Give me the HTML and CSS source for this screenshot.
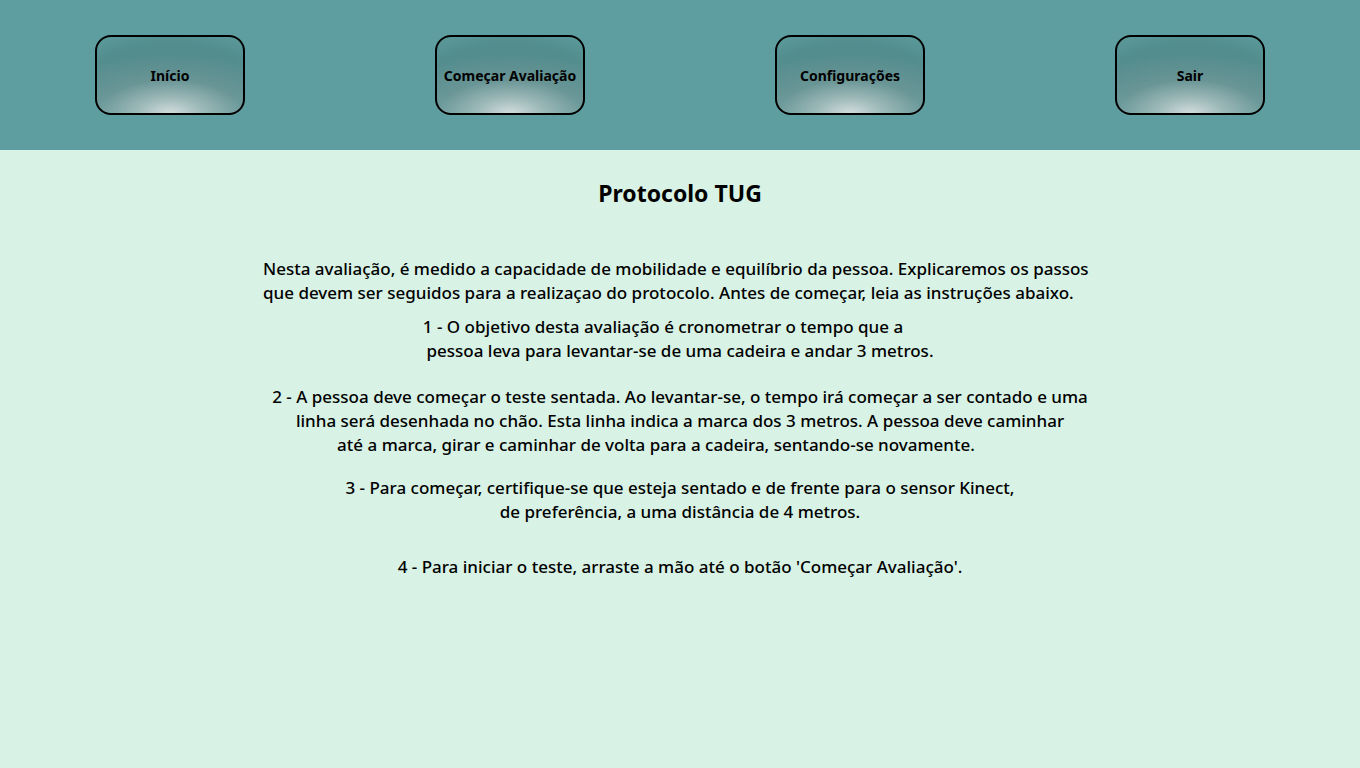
FILE: index.html
```html
<!DOCTYPE html>
<html lang="pt">
<head>
<meta charset="utf-8">
<title>Protocolo TUG</title>
<link rel="stylesheet" href="styles.css">
</head>
<body>
<header class="topbar">
  <div class="slot"><button class="nav-btn">Início</button></div>
  <div class="slot"><button class="nav-btn">Começar Avaliação</button></div>
  <div class="slot"><button class="nav-btn">Configurações</button></div>
  <div class="slot"><button class="nav-btn">Sair</button></div>
</header>
<main class="content">
  <h1 class="title">Protocolo TUG</h1>
  <p class="intro">Nesta avaliação, é medido a capacidade de mobilidade e equilíbrio da pessoa. Explicaremos os passos<br>que devem ser seguidos para a realizaçao do protocolo. Antes de começar, leia as instruções abaixo.</p>
  <p class="step step1"><span class="l1a">1 - O objetivo desta avaliação é cronometrar o tempo que a</span><br><span class="l1b">pessoa leva para levantar-se de uma cadeira e andar 3 metros.</span></p>
  <p class="step step2">2 - A pessoa deve começar o teste sentada. Ao levantar-se, o tempo irá começar a ser contado e uma<br>linha será desenhada no chão. Esta linha indica a marca dos 3 metros. A pessoa deve caminhar<br><span class="l2c">até a marca, girar e caminhar de volta para a cadeira, sentando-se novamente.</span></p>
  <p class="step step3">3 - Para começar, certifique-se que esteja sentado e de frente para o sensor Kinect,<br>de preferência, a uma distância de 4 metros.</p>
  <p class="step step4">4 - Para iniciar o teste, arraste a mão até o botão 'Começar Avaliação'.</p>
</main>
</body>
</html>
```
FILE: styles.css
```css
html, body {
  margin: 0;
  padding: 0;
}
body {
  width: 1360px;
  height: 768px;
  background: #d8f2e5;
  font-family: "Noto Sans", "Open Sans", sans-serif;
  color: #000;
  overflow: hidden;
}
.topbar {
  height: 150px;
  background: #5f9ea0;
  display: grid;
  grid-template-columns: repeat(4, 1fr);
  align-items: start;
}
.slot {
  display: flex;
  justify-content: center;
  padding-top: 35px;
}
.nav-btn {
  width: 150px;
  height: 80px;
  box-sizing: border-box;
  border: 2px solid #000;
  border-radius: 16px;
  background:
    radial-gradient(ellipse 90% 80% at 50% 100%, rgba(210,220,220,1) 0%, rgba(170,192,192,0.85) 25%, rgba(128,158,158,0.5) 55%, rgba(95,140,140,0) 100%),
    radial-gradient(ellipse 85% 70% at 50% 50%, #518a8b 0%, #538d8e 60%, #5f9ea0 100%);
  font-family: "Noto Sans", "Open Sans", sans-serif;
  font-weight: 700;
  font-size: 14px;
  color: #000;
  padding: 0;
  display: flex;
  align-items: center;
  justify-content: center;
  white-space: nowrap;
}
.content {
  display: flex;
  flex-direction: column;
  align-items: center;
  font-weight: 500;
  font-size: 17px;
  line-height: 24px;
}
.title {
  margin: 27px 0 0;
  font-size: 23px;
  line-height: 32px;
  font-weight: 700;
}
.intro {
  margin: 48px 0 0;
  text-align: left;
  align-self: flex-start;
  margin-left: 263px;
}
.step {
  margin: 0;
  text-align: center;
}
.step1 { margin-top: 10px; }
.step2 { margin-top: 22px; }
.step3 { margin-top: 19px; }
.step4 { margin-top: 31px; }
.l1a { margin-right: 34px; }
.l2c { margin-right: 48px; }
```
